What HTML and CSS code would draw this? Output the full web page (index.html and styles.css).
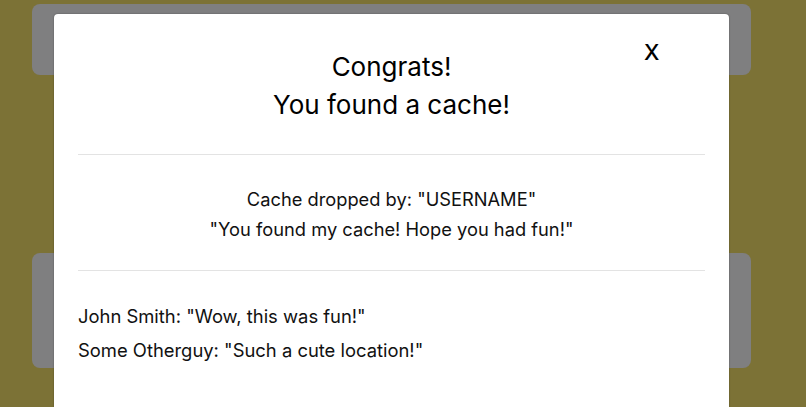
FILE: index.html
```html
<!DOCTYPE html>
<html>
<head>
<meta charset="utf-8">
<link rel="stylesheet" href="styles.css">
</head>
<body>
<div class="page">
  <div class="card card-top"></div>
  <div class="card card-bottom"></div>
</div>
<div class="modal">
  <button class="close">X</button>
  <div class="modal-header">
    <h2 class="title">Congrats!<br>You found a cache!</h2>
  </div>
  <div class="modal-body">
    <p class="line">Cache dropped by: "USERNAME"</p>
    <p class="line">"You found my cache! Hope you had fun!"</p>
  </div>
  <div class="modal-comments">
    <p class="comment">John Smith: "Wow, this was fun!"</p>
    <p class="comment">Some Otherguy: "Such a cute location!"</p>
  </div>
</div>
</body>
</html>
```
FILE: styles.css
```css
html, body {
  margin: 0;
  padding: 0;
  height: 100%;
  overflow: hidden;
}
body {
  background: #7c7236;
  font-family: Inter, "Liberation Sans", Arial, sans-serif;
  color: #111;
  position: relative;
}
.page {
  display: flex;
  flex-direction: column;
  padding: 4px 55px 0 32px;
  gap: 178px;
}
.card {
  background: #7f7f80;
  border-radius: 8px;
}
.card-top { height: 71px; }
.card-bottom { height: 115px; }
.modal {
  position: absolute;
  top: 14px;
  left: 54px;
  width: 675px;
  height: 393px;
  background: #fff;
  border-radius: 4px 4px 0 0;
  box-shadow: 0 0 2px rgba(0,0,0,0.35);
}
.close {
  position: absolute;
  top: 25px;
  left: 590px;
  background: none;
  border: none;
  padding: 0;
  font-family: Inter, "Liberation Sans", Arial, sans-serif;
  font-size: 22px;
  font-weight: 500;
  color: #000;
  line-height: 26px;
}
.modal-header {
  margin: 0 24px;
  padding: 34px 0 30px;
  border-bottom: 1px solid #e3e3e3;
}
.title {
  margin: 0;
  text-align: center;
  font-weight: normal;
  font-size: 26px;
  line-height: 38px;
  color: #000;
}
.modal-body {
  margin: 0 24px;
  padding: 29px 0 26px;
  border-bottom: 1px solid #e3e3e3;
  text-align: center;
}
.line {
  margin: 0;
  font-size: 18.3px;
  line-height: 30px;
}
.modal-comments {
  margin: 0 24px;
  padding: 28px 0 0;
}
.comment {
  margin: 0;
  font-size: 18.4px;
  line-height: 34px;
}
```
